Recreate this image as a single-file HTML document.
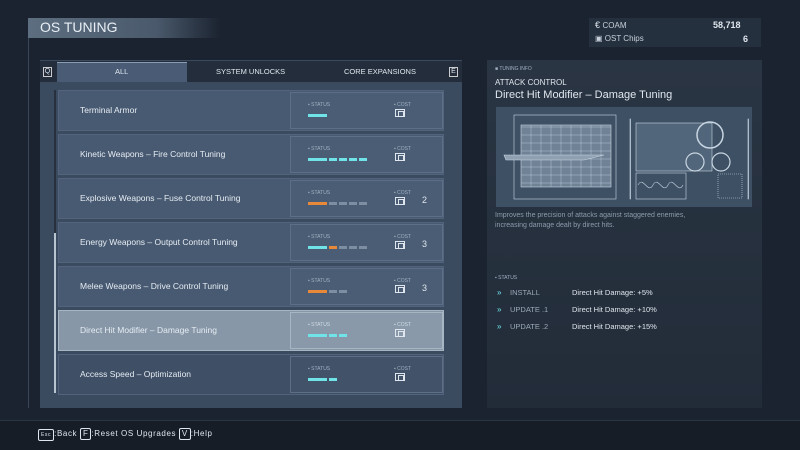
<!DOCTYPE html>
<html><head><meta charset="utf-8"><style>
*{margin:0;padding:0;box-sizing:border-box}
body{width:800px;height:450px;overflow:hidden;background:#1b2330;font-family:"Liberation Sans",sans-serif;position:relative;color:#dfe6ee}
.a{position:absolute}
.row{position:absolute;left:58px;width:386px;height:41px;background:#485a72;border:1px solid #52647b}
.row.sel{background:#8797a8;border-color:#a7b5c3}
.row .t{position:absolute;left:21px;top:14px;font-size:8.5px;color:#e6ecf2}
.sb{position:absolute;left:231px;top:1px;width:153px;height:37px;border:1px solid #5d6f86;background:rgba(255,255,255,0.02)}
.sel .sb{border-color:#a8b6c3}
.lab{position:absolute;font-size:5px;color:#9fb0c2}
.seg{position:absolute;top:21px;height:3px}
.c{background:#6fe3e8}.o{background:#e8893a}.g{background:#7d8ea2}
.ic{position:absolute;left:104px;top:16px;width:10px;height:8px;border:1px solid #dfe6ee}
.ic:after{content:"";position:absolute;left:2px;top:1px;width:4px;height:4px;border:1px solid #dfe6ee}
.num{position:absolute;left:131px;top:14px;font-size:9px;color:#dfe6ee}
.key{display:inline-block;border:1px solid #dfe6ee;border-radius:2px;padding:0 2px;font-size:8px;line-height:10px}
</style></head><body>
<div class="a" style="left:28px;top:18px;width:320px;height:20px;background:linear-gradient(90deg,#5c6e80 0%,#4a5a6c 40%,rgba(60,75,90,0) 60%)"></div>
<div class="a" style="left:40px;top:19px;font-size:14px;color:#e8eef4">OS TUNING</div>
<div class="a" style="left:28px;top:38px;width:1px;height:370px;background:#3a4656"></div>
<div class="a" style="left:40px;top:60px;width:422px;height:348px;background:#3a4a5f"></div>
<div class="a" style="left:40px;top:61px;width:422px;height:21px;background:#232d3b"></div>
<div class="a" style="left:57px;top:62px;width:130px;height:20px;background:#4a5c75;border-top:1px solid #8a9db0"></div>
<div class="a" style="left:43px;top:67px;width:9px;height:10px;border:1px solid #ccc;font-size:7px;text-align:center;line-height:8px">Q</div>
<div class="a" style="left:449px;top:67px;width:9px;height:10px;border:1px solid #ccc;font-size:7px;text-align:center;line-height:8px">E</div>
<div class="a" style="left:115px;top:67px;font-size:7.5px">ALL</div>
<div class="a" style="left:216px;top:67px;font-size:7.5px">SYSTEM UNLOCKS</div>
<div class="a" style="left:344px;top:67px;font-size:7.5px">CORE EXPANSIONS</div>
<div class="a" style="left:54px;top:90px;width:2px;height:303px;background:#27303c"></div>
<div class="a" style="left:54px;top:233px;width:2px;height:160px;background:#b8c4d0"></div>

<div class="row" style="top:90px"><div class="t">Terminal Armor</div><div class="sb"><div class="lab" style="left:17px;top:9px">▪ STATUS</div><div class="lab" style="left:103px;top:9px">▪ COST</div><div class="seg c" style="left:17px;width:19px"></div><div class="ic"></div></div></div>
<div class="row" style="top:134px"><div class="t">Kinetic Weapons – Fire Control Tuning</div><div class="sb"><div class="lab" style="left:17px;top:9px">▪ STATUS</div><div class="lab" style="left:103px;top:9px">▪ COST</div><div class="seg c" style="left:17px;width:19px"></div><div class="seg c" style="left:38px;width:8px"></div><div class="seg c" style="left:48px;width:8px"></div><div class="seg c" style="left:58px;width:8px"></div><div class="seg c" style="left:68px;width:8px"></div><div class="ic"></div></div></div>
<div class="row" style="top:178px"><div class="t">Explosive Weapons – Fuse Control Tuning</div><div class="sb"><div class="lab" style="left:17px;top:9px">▪ STATUS</div><div class="lab" style="left:103px;top:9px">▪ COST</div><div class="seg o" style="left:17px;width:19px"></div><div class="seg g" style="left:38px;width:8px"></div><div class="seg g" style="left:48px;width:8px"></div><div class="seg g" style="left:58px;width:8px"></div><div class="seg g" style="left:68px;width:8px"></div><div class="ic"></div><div class="num">2</div></div></div>
<div class="row" style="top:222px"><div class="t">Energy Weapons – Output Control Tuning</div><div class="sb"><div class="lab" style="left:17px;top:9px">▪ STATUS</div><div class="lab" style="left:103px;top:9px">▪ COST</div><div class="seg c" style="left:17px;width:19px"></div><div class="seg o" style="left:38px;width:8px"></div><div class="seg g" style="left:48px;width:8px"></div><div class="seg g" style="left:58px;width:8px"></div><div class="seg g" style="left:68px;width:8px"></div><div class="ic"></div><div class="num">3</div></div></div>
<div class="row" style="top:266px"><div class="t">Melee Weapons – Drive Control Tuning</div><div class="sb"><div class="lab" style="left:17px;top:9px">▪ STATUS</div><div class="lab" style="left:103px;top:9px">▪ COST</div><div class="seg o" style="left:17px;width:19px"></div><div class="seg g" style="left:38px;width:8px"></div><div class="seg g" style="left:48px;width:8px"></div><div class="ic"></div><div class="num">3</div></div></div>
<div class="row sel" style="top:310px"><div class="t">Direct Hit Modifier – Damage Tuning</div><div class="sb"><div class="lab" style="left:17px;top:9px;color:#d0dae4">▪ STATUS</div><div class="lab" style="left:103px;top:9px;color:#d0dae4">▪ COST</div><div class="seg c" style="left:17px;width:19px"></div><div class="seg c" style="left:38px;width:8px"></div><div class="seg c" style="left:48px;width:8px"></div><div class="ic"></div></div></div>
<div class="row" style="top:354px;background:#3e4f66"><div class="t">Access Speed – Optimization</div><div class="sb"><div class="lab" style="left:17px;top:9px">▪ STATUS</div><div class="lab" style="left:103px;top:9px">▪ COST</div><div class="seg c" style="left:17px;width:19px"></div><div class="seg c" style="left:38px;width:8px"></div><div class="ic"></div></div></div>

<div class="a" style="left:589px;top:18px;width:172px;height:29px;background:#25303e"></div>
<div class="a" style="left:595px;top:20px;font-size:9px">€ <span style="font-size:8px;color:#c7d0da">COAM</span></div>
<div class="a" style="left:713px;top:20px;font-size:9px;font-weight:bold">58,718</div>
<div class="a" style="left:595px;top:34px;font-size:8px;color:#c7d0da">▣ OST Chips</div>
<div class="a" style="left:743px;top:34px;font-size:9px;font-weight:bold">6</div>
<div class="a" style="left:487px;top:60px;width:275px;height:348px;background:linear-gradient(180deg,#2a3543,#222c39)"></div>
<div class="a" style="left:495px;top:66px;font-size:5px;color:#9fb0c2">■ TUNING INFO</div>
<div class="a" style="left:495px;top:78px;font-size:8px">ATTACK CONTROL</div>
<div class="a" style="left:495px;top:89px;font-size:11px">Direct Hit Modifier – Damage Tuning</div>
<div class="a" style="left:496px;top:107px;width:256px;height:100px;background:#3e5064"></div>
<svg class="a" style="left:496px;top:107px" width="256" height="100" fill="none" stroke="#c9d6e2" stroke-width="0.6">
<rect x="18" y="8" width="102" height="84"/>
<rect x="25" y="18" width="90" height="62" fill="#6f8296"/>
<g stroke-width="0.4"><path d="M25 20h90M25 28h90M25 36h90M25 44h90M25 52h90M25 60h90M25 68h90M25 76h90M35 18v62M45 18v62M55 18v62M65 18v62M75 18v62M85 18v62M95 18v62M105 18v62"/></g>
<path d="M8 48h100l-20 5H10z" fill="#8fa0b2"/>
<rect x="134" y="12" width="0.5" height="80"/>
<rect x="140" y="16" width="76" height="48" fill="#52667b"/>
<rect x="140" y="66" width="50" height="26"/>
<path d="M142 78c5-10 10 10 15 0s10 10 15 0s10 10 15 0"/>
<circle cx="214" cy="28" r="13" stroke-width="1.5"/>
<circle cx="199" cy="55" r="9" stroke-width="1.2"/>
<circle cx="225" cy="55" r="9" stroke-width="1.2"/>
<rect x="222" y="67" width="24" height="24" stroke-dasharray="1 1"/>
<rect x="252" y="12" width="0.5" height="80"/>
</svg>
<div class="a" style="left:495px;top:211px;font-size:7px;line-height:10px;color:#8c9bab">Improves the precision of attacks against staggered enemies,<br>increasing damage dealt by direct hits.</div>
<div class="a" style="left:495px;top:275px;font-size:5px;color:#9fb0c2">▪ STATUS</div>
<div class="a" style="left:497px;top:284px;font-size:8px;line-height:17px;color:#6fe3e8">»<br>»<br>»</div>
<div class="a" style="left:510px;top:284px;font-size:7.5px;line-height:17px;color:#9aa8b6">INSTALL<br>UPDATE .1<br>UPDATE .2</div>
<div class="a" style="left:572px;top:284px;font-size:7.5px;line-height:17px;color:#dfe6ee">Direct Hit Damage: +5%<br>Direct Hit Damage: +10%<br>Direct Hit Damage: +15%</div>
<div class="a" style="left:0;top:420px;width:800px;height:30px;background:#161d27;border-top:1px solid #2a3340"></div>
<div class="a" style="left:38px;top:428px;font-size:8px;letter-spacing:0.6px"><span class="key" style="font-size:5px">Esc</span>:Back <span class="key">F</span>:Reset OS Upgrades <span class="key">V</span>:Help</div>
</body></html>
